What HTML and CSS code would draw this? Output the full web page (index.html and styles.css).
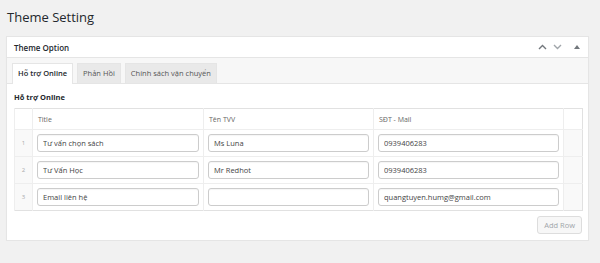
FILE: index.html
```html
<!DOCTYPE html>
<html lang="vi">
<head>
  <meta charset="UTF-8" />
  <meta name="viewport" content="width=device-width, initial-scale=1" />
  <title>Theme Setting</title>
  <link rel="stylesheet" href="styles.css">
</head>
<body>

  <h1 class="page-title">Theme Setting</h1>

  <div class="postbox">
    <div class="postbox-header">
      <span class="postbox-title">Theme Option</span>
      <div class="handle-actions">
        <svg width="9" height="6" viewBox="0 0 9 6"><path d="M1 5 L4.5 1.5 L8 5" fill="none" stroke="#72777c" stroke-width="1.4"/></svg>
        <svg width="9" height="6" viewBox="0 0 9 6"><path d="M1 1 L4.5 4.5 L8 1" fill="none" stroke="#a0a5aa" stroke-width="1.4"/></svg>
        <svg class="toggle" width="6" height="4" viewBox="0 0 6 4"><path d="M0 4 L3 0 L6 4 Z" fill="#72777c"/></svg>
      </div>
    </div>

    <div class="tabs">
      <a class="tab active">Hỗ trợ Online</a>
      <a class="tab">Phản Hồi</a>
      <a class="tab">Chính sách vận chuyển</a>
    </div>

    <div class="tab-content">
      <div class="field-label">Hỗ trợ Online</div>

      <table class="repeater">
        <colgroup>
          <col style="width: 18px">
          <col style="width: 171px">
          <col style="width: 170px">
          <col style="width: 190px">
          <col style="width: 19px">
        </colgroup>
        <thead>
          <tr>
            <th class="col-order"></th>
            <th>Title</th>
            <th>Tên TVV</th>
            <th>SĐT - Mail</th>
            <th class="col-remove"></th>
          </tr>
        </thead>
        <tbody>
          <tr>
            <td class="col-order">1</td>
            <td><input class="text-input" type="text" value="Tư vấn chọn sách"></td>
            <td><input class="text-input" type="text" value="Ms Luna"></td>
            <td><input class="text-input" type="text" value="0939406283"></td>
            <td class="col-remove"></td>
          </tr>
          <tr>
            <td class="col-order">2</td>
            <td><input class="text-input" type="text" value="Tư Vấn Học"></td>
            <td><input class="text-input" type="text" value="Mr Redhot"></td>
            <td><input class="text-input" type="text" value="0939406283"></td>
            <td class="col-remove"></td>
          </tr>
          <tr>
            <td class="col-order">3</td>
            <td><input class="text-input" type="text" value="Email liên hệ"></td>
            <td><input class="text-input" type="text" value=""></td>
            <td><input class="text-input" type="text" value="quangtuyen.humg@gmail.com"></td>
            <td class="col-remove"></td>
          </tr>
        </tbody>
      </table>

      <div class="repeater-footer">
        <button class="add-row" disabled>Add Row</button>
      </div>
    </div>
  </div>

</body>
</html>
```

FILE: styles.css
```css
:root {
  --page-bg: #f1f1f1;
  --border-color: #e5e5e5;
  --text-color: #23282d;
  --muted-color: #72777c;
  --font-main: 'Open Sans', 'Noto Sans', Arial, sans-serif;
}

body {
  margin: 0;
  padding: 0;
  background: var(--page-bg);
  font-family: var(--font-main);
  color: var(--text-color);
}

.page-title {
  margin: 0;
  padding: 6px 0 0 7px;
  height: 30px;
  font-size: 13px;
  font-weight: 400;
  line-height: 22px;
  color: var(--text-color);
}

.postbox {
  margin-left: 6px;
  width: 581px;
  background: #fff;
  border: 1px solid var(--border-color);
  box-shadow: 0 1px 1px rgba(0, 0, 0, 0.04);
  padding-bottom: 6px;
}

.postbox-header {
  display: flex;
  align-items: center;
  justify-content: space-between;
  height: 20px;
  padding: 0 8px 0 7px;
  border-bottom: 1px solid var(--border-color);
}

.postbox-title {
  font-size: 8px;
  font-weight: 600;
}

.handle-actions {
  display: flex;
  align-items: center;
  gap: 6px;
}

.handle-actions .toggle {
  margin-left: 6px;
}

.tabs {
  display: flex;
  align-items: flex-end;
  gap: 4px;
  height: 25px;
  padding-left: 5px;
  background: #f7f7f7;
  border-bottom: 1px solid var(--border-color);
}

.tab {
  height: 19px;
  padding: 0 5px;
  line-height: 19px;
  font-size: 7.5px;
  color: #555;
  background: #e9e9e9;
  border: 1px solid var(--border-color);
  border-bottom: none;
}

.tab.active {
  height: 20px;
  margin-bottom: -1px;
  background: #fff;
  color: var(--text-color);
  font-weight: 600;
}

.tab-content {
  padding: 8px 6px 0 7px;
}

.field-label {
  font-size: 7.5px;
  font-weight: 700;
  line-height: 10px;
  margin-bottom: 6px;
}

.repeater {
  width: 568px;
  border-collapse: collapse;
  table-layout: fixed;
  border: 1px solid #e1e1e1;
}

.repeater th {
  height: 20px;
  padding: 0 5px;
  text-align: left;
  font-size: 7px;
  font-weight: 400;
  color: #666;
  border-left: 1px solid #eee;
  border-bottom: 1px solid #eee;
}

.repeater td {
  height: 26px;
  padding: 0 4px 0 4px;
  border-left: 1px solid #eee;
  border-top: 1px solid #eee;
}

.repeater .col-order {
  padding: 0;
  text-align: center;
  font-size: 6px;
  color: #aaa;
  background: #f9f9f9;
}

.repeater th.col-order {
  background: #fff;
}

.repeater .col-remove {
  padding: 0;
  background: #f9f9f9;
}

.repeater th.col-remove {
  background: #fff;
}

.text-input {
  display: block;
  box-sizing: border-box;
  width: 100%;
  height: 18px;
  padding: 0 5px;
  font-family: var(--font-main);
  font-size: 7.5px;
  color: #444;
  border: 1px solid #ccc;
  border-radius: 3px;
  box-shadow: inset 0 1px 1px rgba(0, 0, 0, 0.04);
  background: #fff;
}

.repeater-footer {
  display: flex;
  justify-content: flex-end;
  padding-top: 5px;
}

.add-row {
  height: 18px;
  padding: 0 6px;
  font-family: var(--font-main);
  font-size: 7.5px;
  color: #a0a5aa;
  background: #f7f7f7;
  border: 1px solid #ddd;
  border-radius: 3px;
}
```
